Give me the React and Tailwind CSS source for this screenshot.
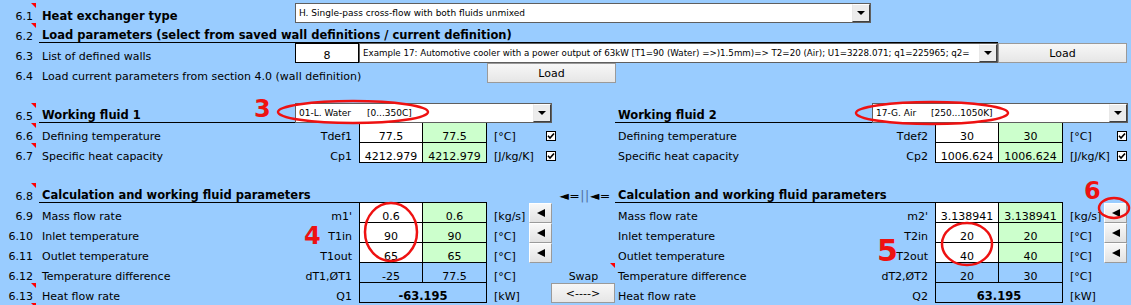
import React from "react";

const Note = () => (
    <span className="absolute right-0 top-0 h-0 w-0 border-l-[5px] border-t-[5px] border-l-transparent border-t-[#ff0000]" />
);

const Num = ({n, note}) => (
    <div className="relative flex h-full w-[36px] shrink-0 items-end justify-end pr-[3px] pb-px">
        {n}
        {note && <Note />}
    </div>
);

const Sp = () => <div className="w-[3px] shrink-0" />;

const Label = ({w, bold, line, sym, children}) => (
    <div className={`flex h-full shrink-0 items-end justify-between whitespace-nowrap pb-px pl-[3px] pr-[7px] ${w} ${bold ? "text-[11.5px] font-bold" : ""} ${line ? "border-b border-black" : ""}`}>
        <span>{children}</span>
        {sym && <span>{sym}</span>}
    </div>
);

const Val = ({children, bg = "", first, bold, w = "w-[64px]"}) => (
    <div className={`flex h-full shrink-0 items-end justify-center border-b border-r border-black ${first ? "border-l" : ""} ${bg} ${bold ? "text-[11.5px] font-bold" : ""} ${w}`}>
        {children}
    </div>
);

const Unit = ({w = "w-[42px]", children}) => (
    <div className={`flex h-full shrink-0 items-end whitespace-nowrap pb-px pl-[7px] ${w}`}>{children}</div>
);

const DownTri = () => (
    <span className="h-0 w-0 border-x-[4px] border-t-[4px] border-x-transparent border-t-black" />
);

const LeftTri = () => (
    <span className="h-0 w-0 border-y-[4px] border-r-[8px] border-y-transparent border-r-black" />
);

const Dropdown = ({w, size = "text-[9px]", children}) => (
    <div className={`flex h-full shrink-0 border border-[#5f5f5f] bg-white ${w}`}>
        <div className={`flex min-w-0 flex-1 items-center overflow-hidden whitespace-nowrap pl-[3px] ${size}`}>{children}</div>
        <div className="flex w-[18px] shrink-0 items-center justify-center border border-b-[#404040] border-l-[#e8e8e8] border-r-[#404040] border-t-white bg-[#ececec]">
            <DownTri />
        </div>
    </div>
);

const Button = ({w, children}) => (
    <div className={`flex h-full shrink-0 items-center justify-center border border-[#9a9a9a] bg-gradient-to-b from-[#f7f7f7] to-[#e6e6e6] ${w}`}>
        {children}
    </div>
);

const ArrowBtn = () => (
    <div className="flex h-full w-[23px] shrink-0 items-center justify-center border border-b-[#9a9a9a] border-l-white border-r-[#9a9a9a] border-t-white bg-gradient-to-b from-[#f8f8f8] to-[#e2e2e2]">
        <LeftTri />
    </div>
);

const Check = () => (
    <div className="flex h-[10px] w-[10px] items-center justify-center border border-black bg-white">
        <svg width="8" height="8" viewBox="0 0 8 8">
            <path d="M1 3.8 L3 6 L7 1.5" stroke="black" strokeWidth="1.6" fill="none" />
        </svg>
    </div>
);

const CheckCol = ({offset}) => (
    <div className="flex h-full w-[23px] shrink-0 items-end pb-[2px]">
        <div className={offset}>
            <Check />
        </div>
    </div>
);

const Row = ({children, h = "h-[20px]"}) => <div className={`flex ${h}`}>{children}</div>;

const Gap = ({children, note}) => (
    <div className="relative flex h-full w-[63px] shrink-0 items-end justify-center pb-px">
        {children}
        {note && <Note />}
    </div>
);

export default function App() {
    return (
        <div className="relative h-[305px] w-[1131px] overflow-hidden bg-[#99ccff] pt-[3px] font-['DejaVu_Sans',sans-serif] text-[11px] leading-none text-black">
            <Row>
                <Num n="6.1" note />
                <Sp />
                <Label w="w-[256px]" bold>Heat exchanger type</Label>
                <Dropdown w="w-[576px]">H. Single-pass cross-flow with both fluids unmixed</Dropdown>
            </Row>
            <Row>
                <Num n="6.2" note />
                <Sp />
                <Label w="w-[959px]" bold line>Load parameters (select from saved wall definitions / current definition)</Label>
            </Row>
            <Row>
                <Num n="6.3" />
                <Sp />
                <Label w="w-[256px]">List of defined walls</Label>
                <div className="flex h-full w-[64px] shrink-0 items-end justify-center border border-black bg-white pb-px">8</div>
                <Dropdown w="w-[639px]" size="text-[8.7px]">
                    Example 17: Automotive cooler with a power output of 63kW [T1=90 (Water) =&gt;)1.5mm)=&gt; T2=20 (Air); U1=3228.071; q1=225965; q2=
                </Dropdown>
                <Button w="w-[129px]">Load</Button>
            </Row>
            <Row>
                <Num n="6.4" />
                <Sp />
                <Label w="w-[448px]">Load current parameters from section 4.0 (wall definition)</Label>
                <Button w="w-[129px]">Load</Button>
            </Row>
            <Row />
            <Row>
                <Num n="6.5" note />
                <Sp />
                <Label w="w-[256px]" bold line>Working fluid 1</Label>
                <Dropdown w="w-[257px]">
                    <span className="inline-block w-[68px]">01-L. Water</span>
                    <span>[0...350C]</span>
                </Dropdown>
                <Gap />
                <Label w="w-[257px]" bold line>Working fluid 2</Label>
                <Dropdown w="w-[256px]">
                    <span className="inline-block w-[55px]">17-G. Air</span>
                    <span>[250...1050K]</span>
                </Dropdown>
            </Row>
            <Row>
                <Num n="6.6" note />
                <Sp />
                <Label w="w-[320px]" sym="Tdef1">Defining temperature</Label>
                <Val first bg="bg-white">77.5</Val>
                <Val bg="bg-[#ccffcc]">77.5</Val>
                <Unit>[°C]</Unit>
                <CheckCol offset="ml-[17px]" />
                <Gap />
                <Label w="w-[320px]" sym="Tdef2">Defining temperature</Label>
                <Val first bg="bg-white">30</Val>
                <Val bg="bg-[#ccffcc]">30</Val>
                <Unit w="w-[41px]">[°C]</Unit>
                <CheckCol offset="ml-[13px]" />
            </Row>
            <Row>
                <Num n="6.7" note />
                <Sp />
                <Label w="w-[320px]" sym="Cp1">Specific heat capacity</Label>
                <Val first bg="bg-white">4212.979</Val>
                <Val bg="bg-[#ccffcc]">4212.979</Val>
                <Unit>[J/kg/K]</Unit>
                <CheckCol offset="ml-[17px]" />
                <Gap />
                <Label w="w-[320px]" sym="Cp2">Specific heat capacity</Label>
                <Val first bg="bg-white">1006.624</Val>
                <Val bg="bg-[#ccffcc]">1006.624</Val>
                <Unit w="w-[41px]">[J/kg/K]</Unit>
                <CheckCol offset="ml-[13px]" />
            </Row>
            <Row />
            <Row>
                <Num n="6.8" note />
                <Sp />
                <Label w="w-[448px]" bold line>Calculation and working fluid parameters</Label>
                <div className="w-[65px] shrink-0" />
                <Gap>
                    <span className="whitespace-nowrap pl-[3px] text-[12.5px] tracking-[0.5px]">
                        ◄=<span className="text-[#4f6f9f]">||</span>◄=
                    </span>
                </Gap>
                <Label w="w-[448px]" bold line>Calculation and working fluid parameters</Label>
            </Row>
            <Row>
                <Num n="6.9" />
                <Sp />
                <Label w="w-[320px]" sym="m1'">Mass flow rate</Label>
                <Val first bg="bg-white">0.6</Val>
                <Val bg="bg-[#ccffcc]">0.6</Val>
                <Unit>[kg/s]</Unit>
                <ArrowBtn />
                <Gap />
                <Label w="w-[320px]" sym="m2'">Mass flow rate</Label>
                <Val first bg="bg-white">3.138941</Val>
                <Val bg="bg-[#ccffcc]">3.138941</Val>
                <Unit w="w-[41px]">[kg/s]</Unit>
                <ArrowBtn />
            </Row>
            <Row>
                <Num n="6.10" />
                <Sp />
                <Label w="w-[320px]" sym="T1in">Inlet temperature</Label>
                <Val first bg="bg-white">90</Val>
                <Val bg="bg-[#ccffcc]">90</Val>
                <Unit>[°C]</Unit>
                <ArrowBtn />
                <Gap />
                <Label w="w-[320px]" sym="T2in">Inlet temperature</Label>
                <Val first bg="bg-white">20</Val>
                <Val bg="bg-[#ccffcc]">20</Val>
                <Unit w="w-[41px]">[°C]</Unit>
                <ArrowBtn />
            </Row>
            <Row>
                <Num n="6.11" />
                <Sp />
                <Label w="w-[320px]" sym="T1out">Outlet temperature</Label>
                <Val first bg="bg-white">65</Val>
                <Val bg="bg-[#ccffcc]">65</Val>
                <Unit>[°C]</Unit>
                <ArrowBtn />
                <Gap />
                <Label w="w-[320px]" sym="T2out">Outlet temperature</Label>
                <Val first bg="bg-white">40</Val>
                <Val bg="bg-[#ccffcc]">40</Val>
                <Unit w="w-[41px]">[°C]</Unit>
                <ArrowBtn />
            </Row>
            <Row>
                <Num n="6.12" />
                <Sp />
                <Label w="w-[320px]" sym="dT1,ØT1">Temperature difference</Label>
                <Val first>-25</Val>
                <Val>77.5</Val>
                <Unit>[°C]</Unit>
                <div className="w-[23px] shrink-0" />
                <Gap note>Swap</Gap>
                <Label w="w-[320px]" sym="dT2,ØT2">Temperature difference</Label>
                <Val first>20</Val>
                <Val>30</Val>
                <Unit w="w-[41px]">[°C]</Unit>
            </Row>
            <Row>
                <Num n="6.13" note />
                <Sp />
                <Label w="w-[320px]" sym="Q1">Heat flow rate</Label>
                <Val first bold w="w-[128px]">-63.195</Val>
                <Unit>[kW]</Unit>
                <div className="w-[22px] shrink-0" />
                <Button w="w-[64px]">&lt;----&gt;</Button>
                <Label w="w-[320px]" sym="Q2">Heat flow rate</Label>
                <Val first bold w="w-[128px]">63.195</Val>
                <Unit w="w-[41px]">[kW]</Unit>
            </Row>
            <Row h="h-[2px]">
                <div className="relative h-[20px] w-[36px] shrink-0">
                    <Note />
                </div>
            </Row>

            <svg className="pointer-events-none absolute left-0 top-0" width="1131" height="305">
                <g fill="none" stroke="#ee1111" strokeWidth="2.5">
                    <ellipse cx="353" cy="112" rx="75" ry="11" />
                    <ellipse cx="932" cy="113" rx="76" ry="11" />
                    <ellipse cx="391" cy="232" rx="26" ry="29" />
                    <ellipse cx="967" cy="244" rx="25" ry="21" />
                    <ellipse cx="1114" cy="208" rx="15" ry="10" />
                </g>
            </svg>
            <span className="absolute left-[254px] top-[97px] text-[24px] font-bold text-[#ee1111]">3</span>
            <span className="absolute left-[1084px] top-[179px] text-[24px] font-bold text-[#ee1111]">6</span>
            <span className="absolute left-[304px] top-[224px] text-[24px] font-bold text-[#ee1111]">4</span>
            <span className="absolute left-[877px] top-[236px] text-[30px] font-bold text-[#ee1111]">5</span>
        </div>
    );
}
